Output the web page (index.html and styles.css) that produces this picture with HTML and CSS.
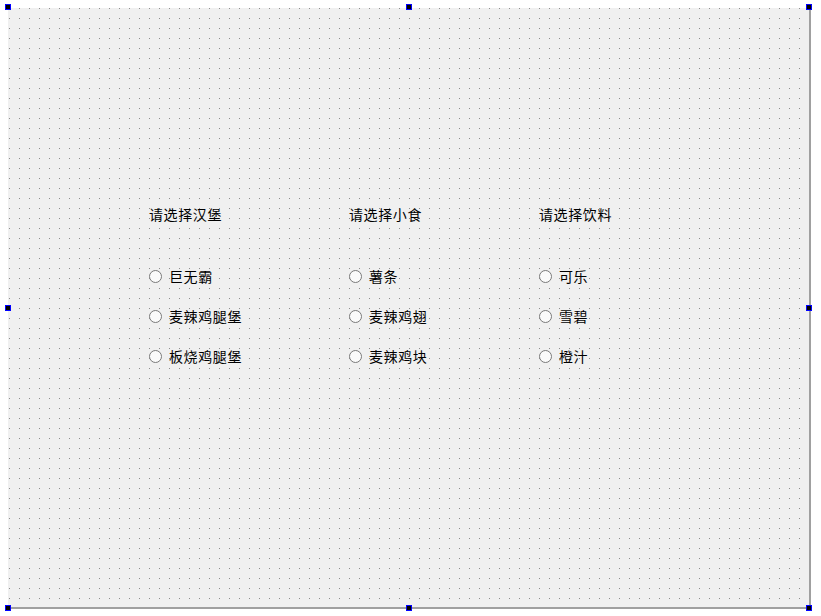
FILE: index.html
```html
<!DOCTYPE html>
<html lang="zh-CN">
<head>
    <meta charset="UTF-8">
    <title>点餐</title>
    <link rel="stylesheet" href="styles.css">
</head>
<body>
    <div class="form">
        <span class="handle h-tl"></span>
        <span class="handle h-tm"></span>
        <span class="handle h-tr"></span>
        <span class="handle h-ml"></span>
        <span class="handle h-mr"></span>
        <span class="handle h-bl"></span>
        <span class="handle h-bm"></span>
        <span class="handle h-br"></span>

        <div class="group burger">
            <div class="title">请选择汉堡</div>
            <label class="radio"><span class="dot"></span>巨无霸</label>
            <label class="radio"><span class="dot"></span>麦辣鸡腿堡</label>
            <label class="radio"><span class="dot"></span>板烧鸡腿堡</label>
        </div>

        <div class="group snack">
            <div class="title">请选择小食</div>
            <label class="radio"><span class="dot"></span>薯条</label>
            <label class="radio"><span class="dot"></span>麦辣鸡翅</label>
            <label class="radio"><span class="dot"></span>麦辣鸡块</label>
        </div>

        <div class="group drink">
            <div class="title">请选择饮料</div>
            <label class="radio"><span class="dot"></span>可乐</label>
            <label class="radio"><span class="dot"></span>雪碧</label>
            <label class="radio"><span class="dot"></span>橙汁</label>
        </div>
    </div>
</body>
</html>
```

FILE: styles.css
```css
body {
    margin: 0;
    padding: 8px;
    background: #ffffff;
    font-family: "Noto Sans CJK SC", "DejaVu Sans", sans-serif;
    color: #000;
}

.form {
    position: relative;
    box-sizing: border-box;
    width: 803px;
    height: 601px;
    background-color: #f0f0f0;
    background-image: radial-gradient(circle at 5.5px 5.5px, #8c8c8c 0.6px, transparent 0.9px);
    background-size: 10px 10px;
    background-position: 6px -5px;
    border-right: 2px solid #a0a0a0;
    border-bottom: 2px solid #a0a0a0;
    display: flex;
    padding: 197px 0 0 141px;
}

.handle {
    position: absolute;
    width: 4px;
    height: 4px;
    background: #000;
    border: 1px solid #0000ff;
}
.h-tl { left: -3px; top: -4px; }
.h-tm { left: 398px; top: -4px; }
.h-tr { left: 798px; top: -4px; }
.h-ml { left: -3px; top: 297px; }
.h-mr { left: 798px; top: 297px; }
.h-bl { left: -3px; top: 597px; }
.h-bm { left: 398px; top: 597px; }
.h-br { left: 798px; top: 597px; }

.group {
    display: flex;
    flex-direction: column;
}
.burger { width: 200px; }
.snack { width: 190px; }

.title {
    font-size: 14px;
    line-height: 18px;
    letter-spacing: 0.6px;
    margin-bottom: 44px;
}

.radio {
    display: flex;
    align-items: center;
    font-size: 14px;
    line-height: 18px;
    letter-spacing: 0.6px;
    height: 18px;
    margin-bottom: 22px;
}

.dot {
    box-sizing: border-box;
    width: 13px;
    height: 13px;
    border: 1px solid #7a7a7a;
    border-radius: 50%;
    background: #fbfbfb;
    margin-right: 7px;
    margin-top: 1px;
}
```
